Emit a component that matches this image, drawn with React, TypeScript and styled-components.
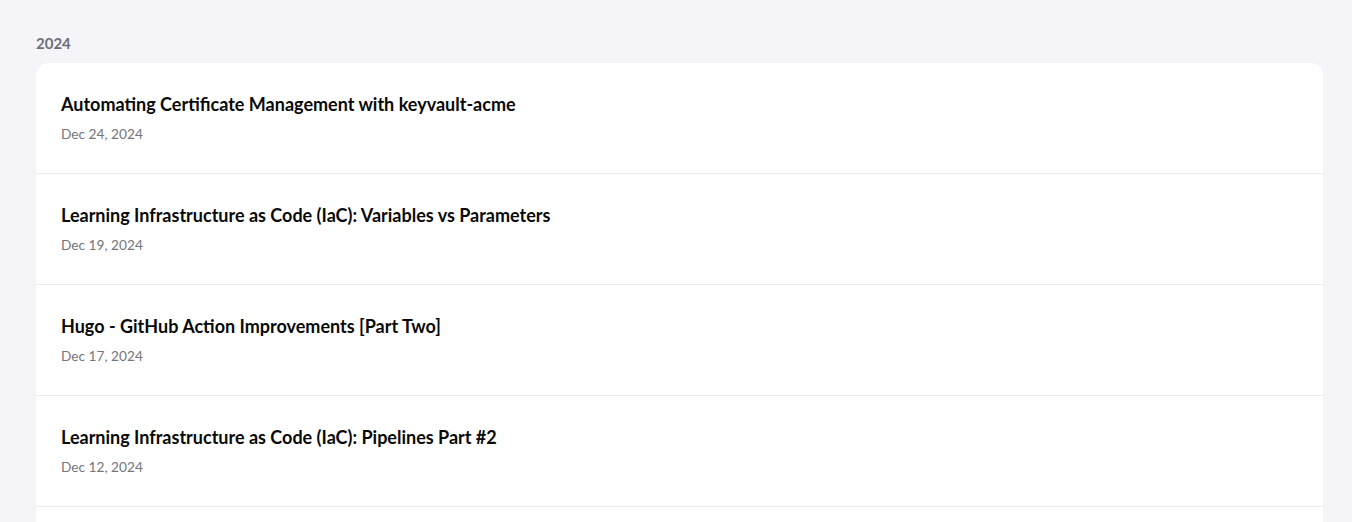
import React from "react";
import styled, { createGlobalStyle } from "styled-components";

const Global = createGlobalStyle`
  html, body { margin: 0; padding: 0; background: #f4f4f9; }
  body { font-family: Lato, "Open Sans", sans-serif; }
`;

const Page = styled.main`
  padding: 32px 29px 40px 36px;
`;

const Year = styled.h2`
  margin: 0 0 8px;
  font-size: 15px;
  line-height: 22.5px;
  font-weight: 700;
  color: #6e6e76;
`;

const Card = styled.section`
  background: #fff;
  border-radius: 12px;
  box-shadow: 0 1px 2px rgba(0, 0, 0, 0.03);
  overflow: hidden;
`;

const Row = styled.a`
  display: flex;
  flex-direction: column;
  gap: 5px;
  padding: 28px 25px 29px;
  text-decoration: none;
  border-bottom: 1px solid #ececf0;
`;

const Title = styled.h3`
  margin: 0;
  font-size: 18px;
  line-height: 27px;
  font-weight: 700;
  color: #0a0a0a;
`;

const DateText = styled.time`
  font-size: 13.7px;
  line-height: 21px;
  color: #75757c;
`;

const posts = [
  { title: "Automating Certificate Management with keyvault-acme", date: "Dec 24, 2024" },
  { title: "Learning Infrastructure as Code (IaC): Variables vs Parameters", date: "Dec 19, 2024" },
  { title: "Hugo - GitHub Action Improvements [Part Two]", date: "Dec 17, 2024" },
  { title: "Learning Infrastructure as Code (IaC): Pipelines Part #2", date: "Dec 12, 2024" },
  { title: "Learning Infrastructure as Code (IaC): Pipelines Part #1", date: "Dec 05, 2024" },
];

export default function App() {
  return (
    <>
      <Global />
      <Page>
        <Year>2024</Year>
        <Card>
          {posts.map((p) => (
            <Row key={p.title} href="#">
              <Title>{p.title}</Title>
              <DateText>{p.date}</DateText>
            </Row>
          ))}
        </Card>
      </Page>
    </>
  );
}
